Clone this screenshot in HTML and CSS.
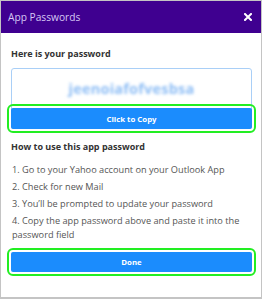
FILE: index.html
```html
<!DOCTYPE html>
<html>
<head>
<meta charset="utf-8">
<link rel="stylesheet" href="styles.css">
</head>
<body>
<div class="dialog">
  <div class="header">
    <span class="title">App Passwords</span>
    <svg class="close" width="8" height="8" viewBox="0 0 8 8"><path d="M1 1 L7 7 M7 1 L1 7" stroke="#fff" stroke-width="2" stroke-linecap="square"/></svg>
  </div>
  <div class="content">
    <div class="heading">Here is your password</div>
    <div class="pwbox">
      <div class="pw"><span class="pwtext">jeenoiafofvesbsa</span></div>
      <button class="btn copy">Click to Copy</button>
    </div>
    <div class="heading how">How to use this app password</div>
    <ol class="steps">
      <li>1. Go to your Yahoo account on your Outlook App</li>
      <li>2. Check for new Mail</li>
      <li>3. You’ll be prompted to update your password</li>
      <li>4. Copy the app password above and paste it into the password field</li>
    </ol>
    <button class="btn done">Done</button>
  </div>
</div>
</body>
</html>
```
FILE: styles.css
```css
html, body {
  margin: 0;
  padding: 0;
  background: #fff;
}
.dialog {
  width: 262px;
  height: 299px;
  box-sizing: border-box;
  border: 1px solid #c4c4c4;
  border-bottom-width: 2px;
  font-family: "Open Sans", "Liberation Sans", sans-serif;
  display: flex;
  flex-direction: column;
}
.header {
  height: 32px;
  background: #3f0090;
  display: flex;
  align-items: center;
  justify-content: space-between;
  padding: 0 9px 0 7px;
  flex-shrink: 0;
}
.title {
  color: #d6c8f4;
  font-size: 10.2px;
}
.close {
  display: block;
}
.content {
  padding: 14px 9px 0 10px;
  display: flex;
  flex-direction: column;
}
.heading {
  font-size: 9px;
  font-weight: 700;
  color: #333;
  line-height: 14px;
}
.pwbox {
  margin-top: 7px;
  border: 1px solid #a9cff7;
  border-radius: 3px;
  display: flex;
  flex-direction: column;
}
.pw {
  height: 39px;
  display: flex;
  align-items: center;
  justify-content: center;
}
.pwtext {
  color: #8dbdf5;
  font-size: 14.5px;
  font-weight: 700;
  filter: blur(1.4px);
  letter-spacing: 0.2px;
}
.btn {
  border: none;
  background: #1b8cfd;
  color: #fff;
  font-family: "Open Sans", "Liberation Sans", sans-serif;
  font-weight: 700;
  font-size: 7.8px;
  padding: 0;
  outline: 2px solid #22ee22;
  outline-offset: 2px;
  border-radius: 2px;
}
.copy {
  height: 21px;
  margin: 0 -1px -1px;
}
.how {
  margin-top: 11px;
}
.steps {
  list-style: none;
  margin: 9px 0 0;
  padding: 0;
  display: flex;
  flex-direction: column;
  gap: 3px;
}
.steps li {
  font-size: 9.2px;
  line-height: 14px;
  color: #555;
  padding-left: 1px;
}
.done {
  margin-top: 10px;
  height: 20px;
}
```
